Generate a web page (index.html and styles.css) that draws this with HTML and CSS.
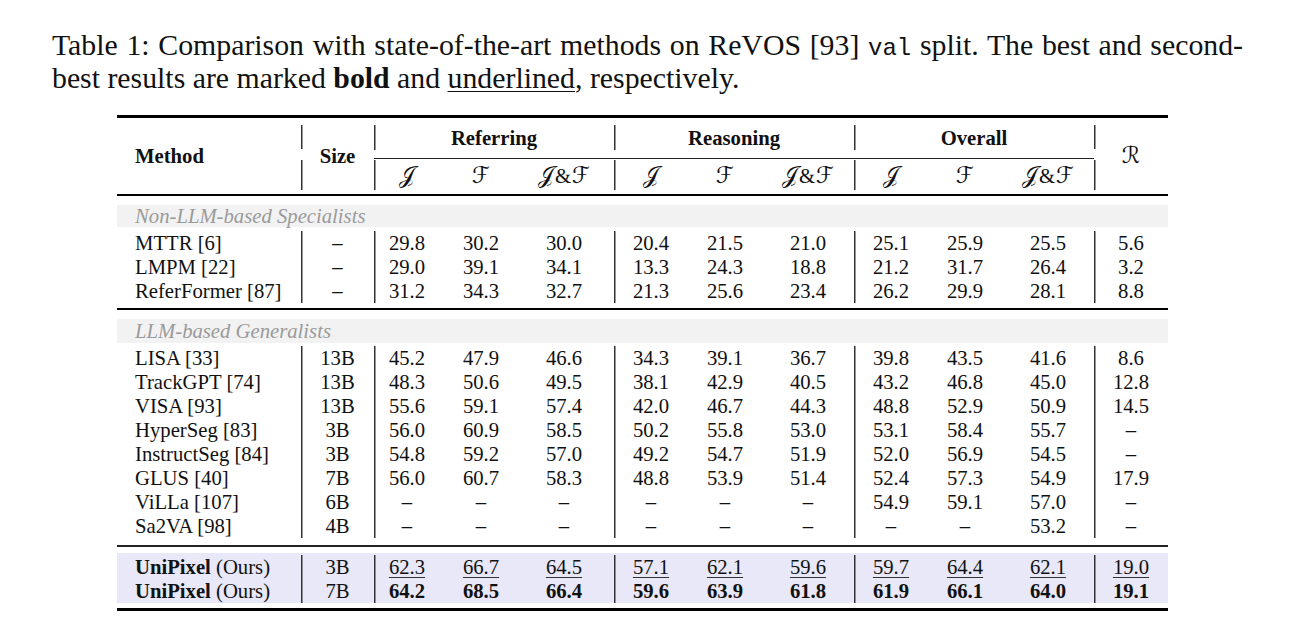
FILE: index.html
```html
<!DOCTYPE html>
<html>
<head>
<meta charset="utf-8">
<link rel="stylesheet" href="styles.css">
</head>
<body>
<div class="page">
  <p class="caption">
    <span class="l1">Table 1: Comparison with state-of-the-art methods on ReVOS [93] <code>val</code> split. The best and second-</span>
    <span class="l2">best results are marked <b>bold</b> and <u>underlined</u>, respectively.</span>
  </p>
  <table class="tbl">
    <colgroup>
      <col class="c-method"><col class="c-size">
      <col class="c-a"><col class="c-b"><col class="c-c">
      <col class="c-a"><col class="c-b"><col class="c-c">
      <col class="c-a"><col class="c-b"><col class="c-c">
      <col class="c-r">
    </colgroup>
    <tbody>
      <tr class="rule heavy"><td colspan="12"></td></tr>
      <tr class="sp sp7"><td colspan="12"></td></tr>
      <tr class="hd1">
        <td class="method hd" rowspan="3">Method</td>
        <td class="size hd split" rowspan="3">Size</td>
        <td class="grp bl" colspan="3">Referring</td>
        <td class="grp bl" colspan="3">Reasoning</td>
        <td class="grp bl" colspan="3">Overall</td>
        <td class="rcol split" rowspan="3"><span class="cal">ℛ</span></td>
      </tr>
      <tr class="cmid"><td colspan="9"><div class="cmidline"></div></td></tr>
      <tr class="hd2">
        <td class="bl rf"><span class="cal">𝒥</span></td><td class="rf"><span class="cal">ℱ</span></td><td class="rf"><span class="cal">𝒥</span><span class="amp">&amp;</span><span class="cal">ℱ</span></td>
        <td class="bl"><span class="cal">𝒥</span></td><td><span class="cal">ℱ</span></td><td><span class="cal">𝒥</span><span class="amp">&amp;</span><span class="cal">ℱ</span></td>
        <td class="bl"><span class="cal">𝒥</span></td><td><span class="cal">ℱ</span></td><td><span class="cal">𝒥</span><span class="amp">&amp;</span><span class="cal">ℱ</span></td>
      </tr>
      <tr class="sp sp4"><td colspan="12"></td></tr>
      <tr class="rule mid"><td colspan="12"></td></tr>
      <tr class="sp sp9"><td colspan="12"></td></tr>
      <tr class="band"><td colspan="12">Non-LLM-based Specialists</td></tr>
      <tr class="sp sp4"><td colspan="12"></td></tr>

      <tr class="row"><td class="name">MTTR [6]</td><td class="bl">–</td><td class="bl rf">29.8</td><td class="rf">30.2</td><td class="rf">30.0</td><td class="bl">20.4</td><td>21.5</td><td>21.0</td><td class="bl">25.1</td><td>25.9</td><td>25.5</td><td class="bl">5.6</td></tr>
      <tr class="row"><td class="name">LMPM [22]</td><td class="bl">–</td><td class="bl rf">29.0</td><td class="rf">39.1</td><td class="rf">34.1</td><td class="bl">13.3</td><td>24.3</td><td>18.8</td><td class="bl">21.2</td><td>31.7</td><td>26.4</td><td class="bl">3.2</td></tr>
      <tr class="row"><td class="name">ReferFormer [87]</td><td class="bl">–</td><td class="bl rf">31.2</td><td class="rf">34.3</td><td class="rf">32.7</td><td class="bl">21.3</td><td>25.6</td><td>23.4</td><td class="bl">26.2</td><td>29.9</td><td>28.1</td><td class="bl">8.8</td></tr>

      <tr class="sp sp5"><td colspan="12"></td></tr>
      <tr class="rule mid"><td colspan="12"></td></tr>
      <tr class="sp sp9"><td colspan="12"></td></tr>
      <tr class="band band2"><td colspan="12">LLM-based Generalists</td></tr>
      <tr class="sp sp3"><td colspan="12"></td></tr>

      <tr class="row"><td class="name">LISA [33]</td><td class="bl">13B</td><td class="bl rf">45.2</td><td class="rf">47.9</td><td class="rf">46.6</td><td class="bl">34.3</td><td>39.1</td><td>36.7</td><td class="bl">39.8</td><td>43.5</td><td>41.6</td><td class="bl">8.6</td></tr>
      <tr class="row"><td class="name">TrackGPT [74]</td><td class="bl">13B</td><td class="bl rf">48.3</td><td class="rf">50.6</td><td class="rf">49.5</td><td class="bl">38.1</td><td>42.9</td><td>40.5</td><td class="bl">43.2</td><td>46.8</td><td>45.0</td><td class="bl">12.8</td></tr>
      <tr class="row"><td class="name">VISA [93]</td><td class="bl">13B</td><td class="bl rf">55.6</td><td class="rf">59.1</td><td class="rf">57.4</td><td class="bl">42.0</td><td>46.7</td><td>44.3</td><td class="bl">48.8</td><td>52.9</td><td>50.9</td><td class="bl">14.5</td></tr>
      <tr class="row"><td class="name">HyperSeg [83]</td><td class="bl">3B</td><td class="bl rf">56.0</td><td class="rf">60.9</td><td class="rf">58.5</td><td class="bl">50.2</td><td>55.8</td><td>53.0</td><td class="bl">53.1</td><td>58.4</td><td>55.7</td><td class="bl">–</td></tr>
      <tr class="row"><td class="name">InstructSeg [84]</td><td class="bl">3B</td><td class="bl rf">54.8</td><td class="rf">59.2</td><td class="rf">57.0</td><td class="bl">49.2</td><td>54.7</td><td>51.9</td><td class="bl">52.0</td><td>56.9</td><td>54.5</td><td class="bl">–</td></tr>
      <tr class="row"><td class="name">GLUS [40]</td><td class="bl">7B</td><td class="bl rf">56.0</td><td class="rf">60.7</td><td class="rf">58.3</td><td class="bl">48.8</td><td>53.9</td><td>51.4</td><td class="bl">52.4</td><td>57.3</td><td>54.9</td><td class="bl">17.9</td></tr>
      <tr class="row"><td class="name">ViLLa [107]</td><td class="bl">6B</td><td class="bl rf">–</td><td class="rf">–</td><td class="rf">–</td><td class="bl">–</td><td>–</td><td>–</td><td class="bl">54.9</td><td>59.1</td><td>57.0</td><td class="bl">–</td></tr>
      <tr class="row"><td class="name">Sa2VA [98]</td><td class="bl">4B</td><td class="bl rf">–</td><td class="rf">–</td><td class="rf">–</td><td class="bl">–</td><td>–</td><td>–</td><td class="bl">–</td><td>–</td><td>53.2</td><td class="bl">–</td></tr>

      <tr class="sp sp7"><td colspan="12"></td></tr>
      <tr class="rule thin"><td colspan="12"></td></tr>
      <tr class="sp sp6"><td colspan="12"></td></tr>
      <tr class="sp sp2 ours"><td colspan="12"></td></tr>

      <tr class="row ours"><td class="name"><b>UniPixel</b> (Ours)</td><td class="bl">3B</td><td class="bl rf"><u>62.3</u></td><td class="rf"><u>66.7</u></td><td class="rf"><u>64.5</u></td><td class="bl"><u>57.1</u></td><td><u>62.1</u></td><td><u>59.6</u></td><td class="bl"><u>59.7</u></td><td><u>64.4</u></td><td><u>62.1</u></td><td class="bl"><u>19.0</u></td></tr>
      <tr class="row ours"><td class="name"><b>UniPixel</b> (Ours)</td><td class="bl">7B</td><td class="bl rf"><b>64.2</b></td><td class="rf"><b>68.5</b></td><td class="rf"><b>66.4</b></td><td class="bl"><b>59.6</b></td><td><b>63.9</b></td><td><b>61.8</b></td><td class="bl"><b>61.9</b></td><td><b>66.1</b></td><td><b>64.0</b></td><td class="bl"><b>19.1</b></td></tr>

      <tr class="sp sp5"><td colspan="12"></td></tr>
      <tr class="rule heavy"><td colspan="12"></td></tr>
    </tbody>
  </table>
</div>
</body>
</html>
```

FILE: styles.css
```css
* { box-sizing: border-box; }

html, body {
  margin: 0;
  background: #ffffff;
}

body {
  color: #111111;
  font-family: "Liberation Serif", "Times New Roman", serif;
}

.page {
  padding: 28px 0 0 52px;
}

.caption {
  margin: 0;
  width: 1191px;
  font-size: 29.8px;
  line-height: 33px;
}

.caption .l1 {
  display: block;
  white-space: nowrap;
  text-align: justify;
  text-align-last: justify;
}

.caption .l2 {
  display: block;
}

.caption code {
  font-family: "Liberation Mono", "DejaVu Sans Mono", monospace;
  font-size: 24px;
  line-height: 1;
}

.caption u {
  text-decoration-thickness: 1px;
  text-underline-offset: 3px;
}

.tbl {
  margin: 21px 0 0 65px;
  width: 1050px;
  table-layout: fixed;
  border-collapse: separate;
  border-spacing: 0;
  font-size: 20.7px;
  line-height: 24px;
}

.c-method { width: 184px; }
.c-size { width: 73px; }
.c-a { width: 74px; }
.c-b { width: 74px; }
.c-c { width: 92px; }
.c-r { width: 74px; }

.tbl td {
  padding: 0;
  text-align: center;
  vertical-align: middle;
  white-space: nowrap;
}

.tbl td.rf {
  padding-right: 8px;
}

.bl {
  box-shadow: inset 1.5px 0 0 #333333;
}

.rule td {
  font-size: 0;
  line-height: 0;
  background: #000000;
}
.rule.heavy td { height: 3px; }
.rule.mid td { height: 2px; }
.rule.thin td { height: 1.5px; background: #222222; }

.sp td { font-size: 0; line-height: 0; }
.sp2 td { height: 2px; }
.sp3 td { height: 3px; }
.sp4 td { height: 4px; }
.sp5 td { height: 5px; }
.sp6 td { height: 6px; }
.sp7 td { height: 7px; }
.sp9 td { height: 9px; }

.hd, .grp {
  font-weight: bold;
}

.hd1 td { height: 25px; }
.hd2 td { height: 30px; }

.tbl td.method {
  text-align: left;
  padding-left: 18px;
  padding-bottom: 4px;
}

.tbl td.size {
  padding-bottom: 4px;
}

.tbl td.rcol {
  padding-bottom: 4px;
}

.split {
  background-image: linear-gradient(#333333, #333333), linear-gradient(#333333, #333333);
  background-size: 1.5px 24px, 1.5px 30px;
  background-position: left top, left bottom;
  background-repeat: no-repeat;
}

.cmid td {
  height: 10px;
  font-size: 0;
  line-height: 0;
}

.cmidline {
  margin-top: 6px;
  height: 1px;
  background: #222222;
}

.cal {
  font-family: "DejaVu Serif", "DejaVu Sans", serif;
  font-size: 23px;
  font-weight: normal;
}

.amp {
  font-size: 20.7px;
  margin: 0 1px;
}

.band td {
  height: 22px;
  line-height: 22px;
  background: #f2f2f2;
  text-align: left;
  padding-left: 18px;
  font-style: italic;
  color: #9a9a9a;
}

.band2 td {
  height: 24px;
  line-height: 24px;
}

.row td {
  height: 24px;
}

.tbl td.name {
  text-align: left;
  padding-left: 18px;
}

.ours td {
  background: #e8e8f8;
}

.tbl u {
  text-decoration-thickness: 1px;
  text-underline-offset: 3px;
  text-decoration-color: #333333;
}
```
